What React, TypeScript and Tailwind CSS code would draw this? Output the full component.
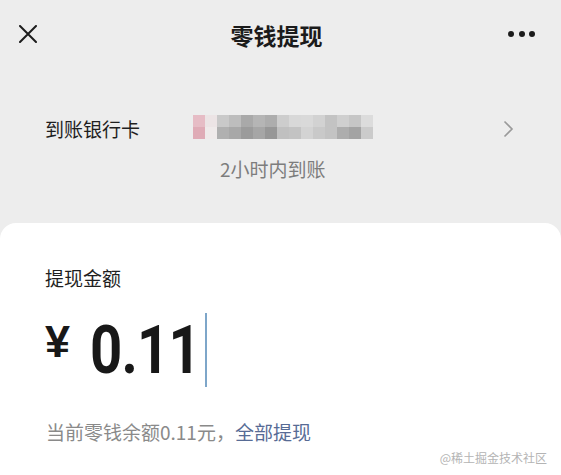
import React from "react";

const topRow = [
  "bg-[#e6bcc5]", "bg-[#ece4e5]", "bg-[#c9c9c9]", "bg-[#bdbdbd]", "bg-[#a9a9a9]",
  "bg-[#b5b5b5]", "bg-[#adadad]", "bg-[#cdcdcd]", "bg-[#d8d8d8]", "bg-[#d9d9d9]",
  "bg-[#d2d2d2]", "bg-[#c3c3c3]", "bg-[#cfcfcf]", "bg-[#c6c6c6]", "bg-[#dcdcdc]",
];
const bottomRow = [
  "bg-[#dfabb6]", "bg-[#efeaea]", "bg-[#b0b0b0]", "bg-[#a8a8a8]", "bg-[#9b9b9b]",
  "bg-[#a6a6a6]", "bg-[#979797]", "bg-[#c0c0c0]", "bg-[#c3c3c3]", "bg-[#d3d3d3]",
  "bg-[#c9c9c9]", "bg-[#c3c3c3]", "bg-[#adadad]", "bg-[#a3a3a3]", "bg-[#cbcbcb]",
];

const cjk = "font-['Noto_Sans_CJK_SC','Noto_Sans',sans-serif]";

export default function App() {
  return (
    <div className={`w-[561px] h-[475px] overflow-hidden bg-[#ededed] flex flex-col ${cjk}`}>
      {/* top bar */}
      <div className="h-[70px] flex items-center justify-between pl-[19px] pr-[26px] shrink-0">
        <svg width="18" height="18" viewBox="0 0 18 18" className="mt-[-2px]">
          <path d="M1 1 L17 17 M17 1 L1 17" stroke="#1c1c1c" strokeWidth="2" strokeLinecap="round" />
        </svg>
        <div className="text-[23px] font-semibold text-[#1b1b1b] leading-none ml-[8px]">零钱提现</div>
        <div className="flex items-center gap-[4.5px] mt-[-2px]">
          <span className="w-[6px] h-[6px] rounded-full bg-[#1b1b1b]" />
          <span className="w-[6px] h-[6px] rounded-full bg-[#1b1b1b]" />
          <span className="w-[6px] h-[6px] rounded-full bg-[#1b1b1b]" />
        </div>
      </div>

      {/* bank card section */}
      <div className="h-[153px] shrink-0 pt-[45px]">
        <div className="flex items-start">
          <div className="w-[193px] shrink-0 pl-[45px] text-[19px] leading-[28px] text-[#1f1f1f]">到账银行卡</div>
          <div className="flex flex-col">
            <div className="flex">
              {topRow.map((c, i) => (
                <div key={i} className={`w-[12px] h-[12px] shrink-0 ${c}`} />
              ))}
            </div>
            <div className="flex">
              {bottomRow.map((c, i) => (
                <div key={i} className={`w-[12px] h-[12px] shrink-0 ${c}`} />
              ))}
            </div>
          </div>
          <div className="ml-auto mr-[47px] mt-[5px]">
            <svg width="11" height="18" viewBox="0 0 11 18">
              <path d="M1.5 1.5 L9 9 L1.5 16.5" fill="none" stroke="#9a9a9a" strokeWidth="1.6" />
            </svg>
          </div>
        </div>
        <div className="pl-[220px] mt-[14px] text-[19px] leading-[24px] text-[#7d7d7d]">2小时内到账</div>
      </div>

      {/* white card */}
      <div className="flex-1 bg-white rounded-t-[16px] pt-[43px] relative">
        <div className="pl-[45px] text-[19px] leading-[24px] text-[#1f1f1f]">提现金额</div>
        <div className="flex items-start pl-[45px] mt-[23px] h-[74px]">
          <span className="font-['Liberation_Sans',sans-serif] font-bold text-[45px] leading-none text-[#181818] mt-[6px]">¥</span>
          <div className="ml-[20px] w-[104px] shrink-0 mt-[4px]">
            <span className="inline-block origin-left scale-x-[0.84] whitespace-nowrap font-['Roboto',sans-serif] font-bold text-[67px] leading-none tracking-[-1px] text-[#181818]">0.11</span>
          </div>
          <span className="ml-[11px] w-[2px] h-[74px] bg-[#7ea6c9]" />
        </div>
        <div className="pl-[46px] mt-[33px] text-[19px] leading-[24px] text-[#8a8a8a]">
          当前零钱余额0.11元，<span className="text-[#576b95]">全部提现</span>
        </div>
        <div className="absolute right-[14px] bottom-[10px] text-[12px] leading-[14px] text-[#b4b4b4]">@稀土掘金技术社区</div>
      </div>
    </div>
  );
}
